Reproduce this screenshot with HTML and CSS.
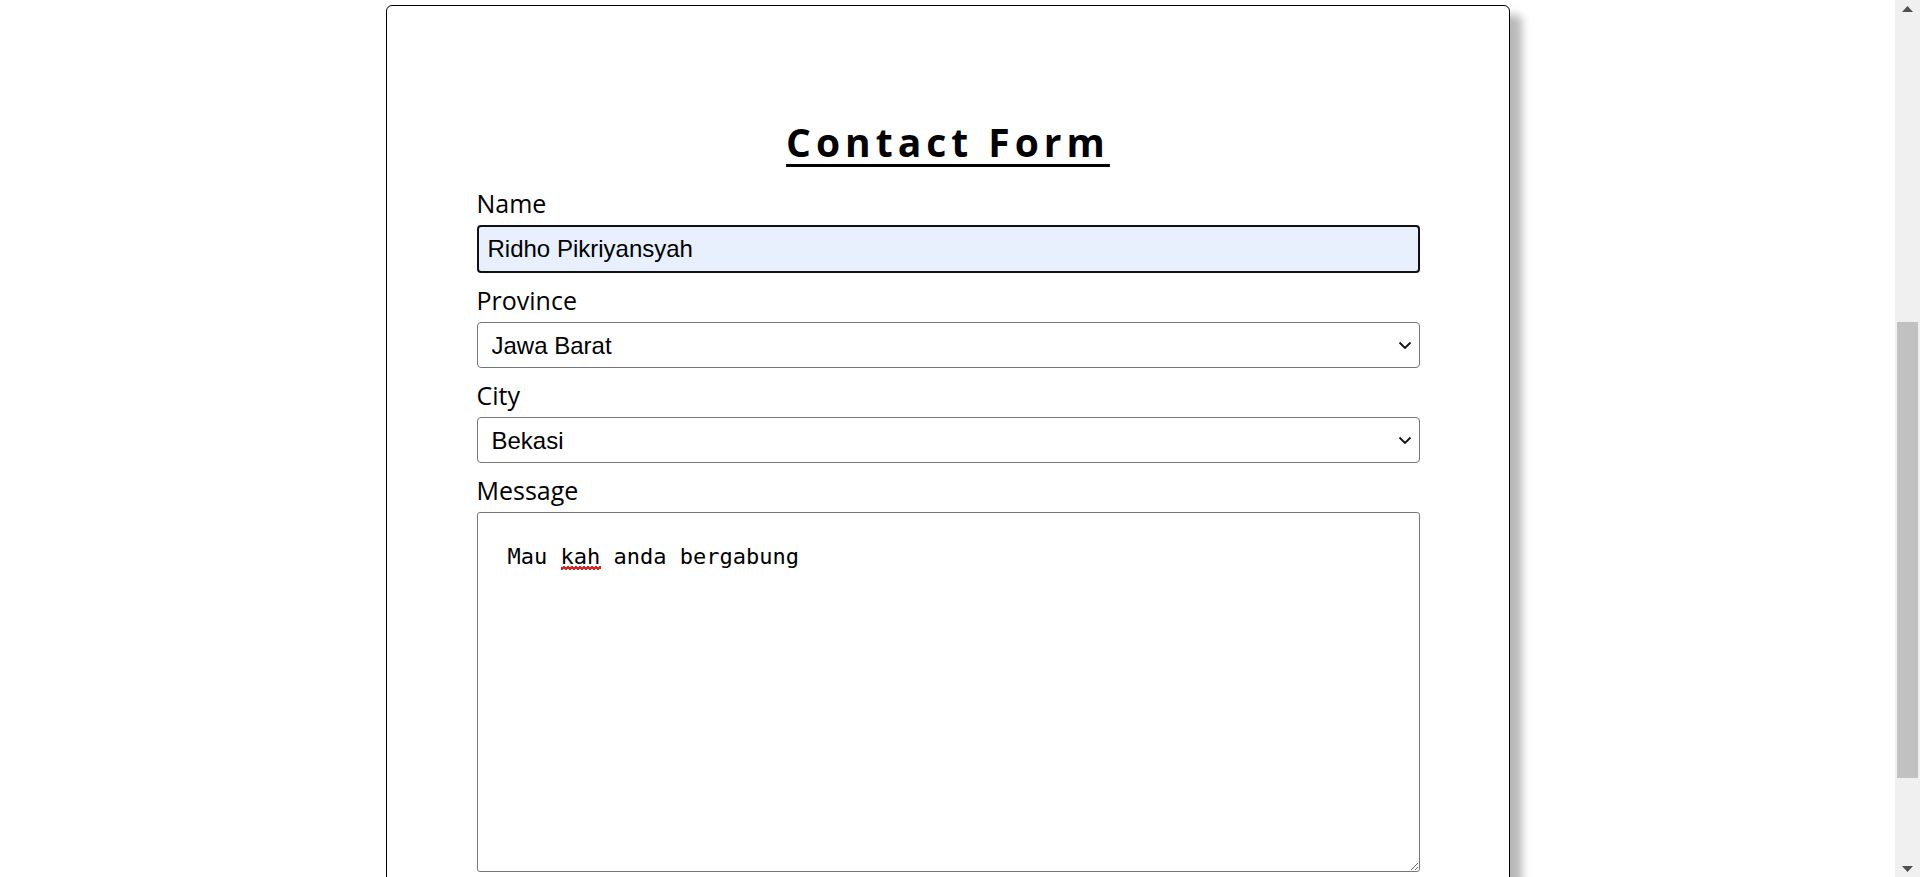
FILE: index.html
```html
<!DOCTYPE html>
<html lang="id">
<head>
<meta charset="utf-8">
<title>Contact Form</title>
<link rel="stylesheet" href="styles.css">
</head>
<body>
<main class="page">
  <form class="card">
    <h1 class="title">Contact Form</h1>
    <label class="label" for="name">Name</label>
    <input id="name" class="field field-name" type="text" value="Ridho Pikriyansyah">
    <label class="label" for="province">Province</label>
    <div class="select-wrap">
      <select id="province" class="field field-select">
        <option>Jawa Barat</option>
        <option>Jawa Tengah</option>
        <option>Jawa Timur</option>
      </select>
      <svg class="chevron" width="14" height="9" viewBox="0 0 14 9" aria-hidden="true"><polyline points="1.5,1.5 7,7 12.5,1.5" fill="none" stroke="#111" stroke-width="1.8"/></svg>
    </div>
    <label class="label" for="city">City</label>
    <div class="select-wrap">
      <select id="city" class="field field-select">
        <option>Bekasi</option>
        <option>Bandung</option>
        <option>Bogor</option>
      </select>
      <svg class="chevron" width="14" height="9" viewBox="0 0 14 9" aria-hidden="true"><polyline points="1.5,1.5 7,7 12.5,1.5" fill="none" stroke="#111" stroke-width="1.8"/></svg>
    </div>
    <label class="label" for="message">Message</label>
    <div class="text-wrap">
      <textarea id="message" class="field field-text" spellcheck="false">Mau kah anda bergabung</textarea>
      <span class="squiggle" aria-hidden="true"></span>
    </div>
    <button class="submit" type="submit">Submit</button>
  </form>
</main>
<div class="scrollbar" aria-hidden="true">
  <div class="sb-button">
    <svg width="11" height="6" viewBox="0 0 11 6"><polygon points="0,6 5.5,0 11,6" fill="#505050"/></svg>
  </div>
  <div class="sb-track">
    <div class="sb-thumb"></div>
  </div>
  <div class="sb-button">
    <svg width="11" height="6" viewBox="0 0 11 6"><polygon points="0,0 5.5,6 11,0" fill="#505050"/></svg>
  </div>
</div>
</body>
</html>
```

FILE: styles.css
```css
html, body {
  margin: 0;
  padding: 0;
  background: #ffffff;
}

.page {
  box-sizing: border-box;
  padding: 5px 25px 40px 0;
}

.card {
  box-sizing: border-box;
  width: 1124px;
  margin: 0 auto;
  padding: 113px 89px 60px 90px;
  display: flex;
  flex-direction: column;
  background: #ffffff;
  border: 1px solid #000000;
  border-radius: 6px;
  box-shadow: 12px 10px 8px rgba(0, 0, 0, 0.28);
}

.title {
  margin: 0 0 23px;
  text-align: center;
  font-family: "Open Sans", sans-serif;
  font-weight: 700;
  font-size: 39px;
  line-height: 46px;
  letter-spacing: 5px;
  color: #000000;
  text-decoration: underline;
  text-decoration-thickness: 3px;
  text-underline-offset: 7px;
}

.label {
  margin: 0 0 7px;
  font-family: "Open Sans", sans-serif;
  font-size: 25px;
  line-height: 30px;
  color: #000000;
}

.field {
  box-sizing: border-box;
  width: 100%;
  margin: 0;
  font-family: "Liberation Sans", Arial, sans-serif;
  font-size: 24px;
  color: #000000;
}

.field-name {
  height: 48px;
  margin-bottom: 12px;
  padding: 0 9px;
  border: 2px solid #101010;
  border-radius: 4px;
  background: #e8f0fe;
  outline: none;
}

.select-wrap {
  position: relative;
  margin-bottom: 12px;
}

.field-select {
  display: block;
  height: 46px;
  padding: 0 40px 0 14px;
  border: 1px solid #767676;
  border-radius: 4px;
  background: #ffffff;
  -webkit-appearance: none;
  appearance: none;
}

.chevron {
  position: absolute;
  right: 8px;
  top: 19px;
  pointer-events: none;
}

.text-wrap {
  position: relative;
}

.field-text {
  display: block;
  height: 360px;
  padding: 31px 30px;
  border: 1px solid #767676;
  border-radius: 3px;
  background: #ffffff;
  font-family: "DejaVu Sans Mono", "Liberation Mono", monospace;
  font-size: 22px;
}

.squiggle {
  position: absolute;
  left: 84px;
  top: 54px;
  width: 40px;
  height: 4px;
  background:
    linear-gradient(135deg, transparent 35%, #e02020 35%, #e02020 65%, transparent 65%) 0 0 / 4px 4px repeat-x,
    linear-gradient(45deg, transparent 35%, #e02020 35%, #e02020 65%, transparent 65%) 2px 0 / 4px 4px repeat-x;
  pointer-events: none;
}

.submit {
  align-self: flex-start;
  margin-top: 22px;
  padding: 8px 28px;
  font-family: "Open Sans", sans-serif;
  font-size: 22px;
  color: #000000;
  background: #efefef;
  border: 1px solid #767676;
  border-radius: 4px;
}

.scrollbar {
  position: fixed;
  top: 0;
  right: 0;
  bottom: 0;
  width: 25px;
  display: flex;
  flex-direction: column;
  background: #f0f0f0;
}

.sb-button {
  height: 17px;
  display: flex;
  align-items: center;
  justify-content: center;
}

.sb-button svg {
  display: block;
}

.sb-track {
  flex: 1;
  padding: 0 2px;
}

.sb-thumb {
  margin-top: 305px;
  height: 456px;
  background: #c1c1c1;
}
```
